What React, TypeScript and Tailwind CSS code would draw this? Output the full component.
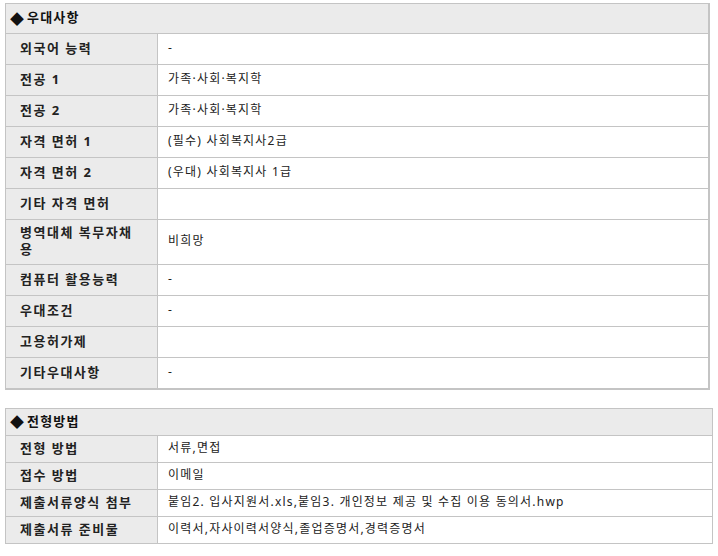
import React from "react";

type Row = { label: React.ReactNode; value?: string; tall?: boolean };

const benefits: Row[] = [
  { label: "외국어 능력", value: "-" },
  { label: "전공 1", value: "가족·사회·복지학" },
  { label: "전공 2", value: "가족·사회·복지학" },
  { label: "자격 면허 1", value: "(필수) 사회복지사2급" },
  { label: "자격 면허 2", value: "(우대) 사회복지사 1급" },
  { label: "기타 자격 면허", value: "" },
  { label: "병역대체 복무자채용", value: "비희망", tall: true },
  { label: "컴퓨터 활용능력", value: "-" },
  { label: "우대조건", value: "-" },
  { label: "고용허가제", value: "" },
  { label: "기타우대사항", value: "-" },
];

const screening: Row[] = [
  { label: "전형 방법", value: "서류,면접" },
  { label: "접수 방법", value: "이메일" },
  { label: "제출서류양식 첨부", value: "붙임2. 입사지원서.xls,붙임3. 개인정보 제공 및 수집 이용 동의서.hwp" },
  { label: "제출서류 준비물", value: "이력서,자사이력서양식,졸업증명서,경력증명서" },
];

function Section({
  title,
  rows,
  rowH,
  headH,
  className,
}: {
  title: string;
  rows: Row[];
  rowH: string;
  headH: string;
  className: string;
}) {
  return (
    <div className={`border-[#c4c4c4] ${className}`}>
      <div className={`${headH} flex items-center bg-[#ebebeb] pb-[1px] pl-[4px] text-[13px] font-bold tracking-[1.2px] text-[#111]`}>
        <span className="mr-[3px] text-[14px] tracking-normal">◆</span>
        {title}
      </div>
      {rows.map((r, i) => (
        <div key={i} className="flex border-t border-[#c4c4c4]">
          <div
            className={`${r.tall ? "h-[44px]" : rowH} flex w-[152px] shrink-0 items-center border-r border-[#c4c4c4] bg-[#ebebeb] pb-[2px] pl-[14px] pr-[12px] text-[13px] font-bold leading-[17px] tracking-[1.5px] text-[#222]`}
          >
            {r.label}
          </div>
          <div className="flex items-center pb-[2px] pl-[10px] tracking-[1.2px] text-[#222]">{r.value}</div>
        </div>
      ))}
    </div>
  );
}

export default function App() {
  return (
    <div
      className="h-[556px] w-[718px] bg-white pl-[5px] pt-[3px] text-[12px]"
      style={{ fontFamily: '"Noto Sans", "Noto Sans CJK KR", sans-serif' }}
    >
      <Section
        title="우대사항"
        rows={benefits}
        rowH="h-[30px]"
        headH="h-[29px]"
        className="w-[705px] border border-r-2 border-b-2"
      />
      <div className="h-[18px]" />
      <Section
        title="전형방법"
        rows={screening}
        rowH="h-[26px]"
        headH="h-[26px]"
        className="w-[708px] border"
      />
    </div>
  );
}
